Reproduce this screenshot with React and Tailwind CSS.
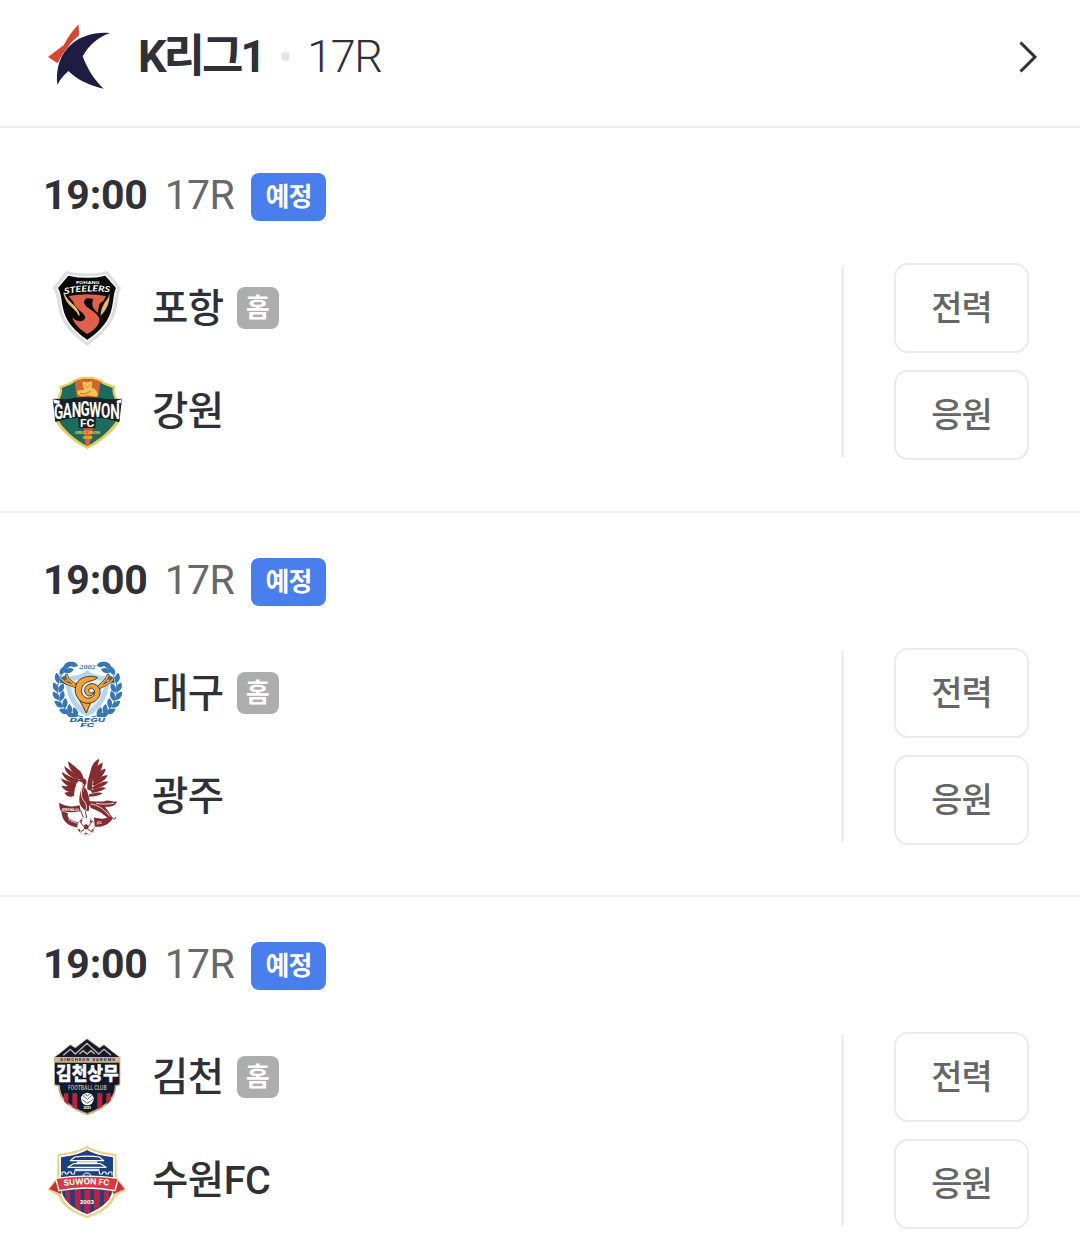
import React from "react";

const PohangCrest = () => (
  <svg viewBox="21 21 240 240" className="w-20 h-20">
    <path d="M78 33 Q143 48 203 33 L243 84 C230 105 238 150 212 190 C190 222 165 240 142 258 C118 240 92 222 72 190 C48 150 55 105 38 84 Z" fill="#dedee0" />
    <path d="M83 43 Q143 56 198 43 L232 84 C221 105 227 148 204 185 C186 213 163 229 142 245 C121 229 100 213 80 185 C58 148 64 105 50 84 Z" fill="#fff" />
    <path d="M85 47 Q143 60 196 47 L228 84 C217 105 223 148 200 183 C182 210 162 225 142 240 C122 225 102 210 84 183 C62 148 68 105 54 84 Z" fill="#0c090a" />
    <path d="M86 108 Q142 98 198 108 L190 124 C178 128 176 136 174 158 C160 150 152 134 160 118 C144 110 130 116 132 130 C138 146 166 152 178 174 C182 196 156 214 142 222 C122 210 106 198 96 172 C112 188 132 188 136 172 C130 154 108 150 100 126 Z" fill="#e0604c" />
    <path d="M72 98 C74 128 110 130 118 166 C104 138 80 138 72 98 Z" fill="#e8c068" stroke="#e8c068" strokeWidth="4" />
    <path d="M208 104 C206 120 184 130 182 166 C198 150 208 132 208 104 Z" fill="#e8c068" stroke="#e8c068" strokeWidth="1" />
    <path id="steelersArc" d="M74 103 Q142 88 213 98" fill="none" />
    <text fill="#fff" fontSize="25" fontWeight="700" fontStyle="italic" className="font-[Lato,sans-serif]">
      <textPath href="#steelersArc" textLength="136" lengthAdjust="spacingAndGlyphs">STEELERS</textPath>
    </text>
    <text x="108" y="73" fill="#fff" fontSize="11" fontWeight="900" textLength="70" lengthAdjust="spacingAndGlyphs" className="font-[Lato,sans-serif]">POHANG</text>
  </svg>
);

const GangwonCrest = () => (
  <svg viewBox="21 12 240 240" className="w-20 h-20">
    <path d="M142 26 C165 26 182 32 192 42 C202 48 216 50 226 55 C222 70 226 82 234 96 L240 158 C222 190 184 222 142 243 C100 222 64 190 45 158 L48 96 C58 82 62 70 58 55 C70 50 82 48 92 42 C104 32 120 26 142 26 Z" fill="#ecc95c" />
    <path d="M142 33 C163 33 178 38 188 48 L218 60 C216 74 220 84 227 97 L230 156 C212 186 180 214 142 234 C104 214 72 186 55 156 L56 97 C64 84 68 74 66 60 L96 48 C106 38 121 33 142 33 Z" fill="#1d6a5e" />
    <path d="M104 42 C120 32 162 30 182 42 L172 98 H112 Z" fill="#d9622f" />
    <path d="M130 176 H160 L148 230 L142 234 L136 228 Z" fill="#d9622f" />
    <path d="M127 42 C132 36 137 44 142 42 C148 40 156 36 158 42 L156 58 C168 62 176 72 174 84 C166 92 150 80 138 84 C126 88 112 84 110 72 C112 64 122 64 128 66 L132 62 C126 56 126 50 127 42 Z" fill="#f6c25a" stroke="#9a5823" strokeWidth="1.5" />
    <path d="M120 76 C132 80 144 76 152 68 M135 52 h3 M148 52 h3 M140 58 h5" fill="none" stroke="#a35e24" strokeWidth="2.5" />
    <path d="M38 92 L78 94 Q140 80 202 94 L246 92 L238 163 Q200 150 168 149 L166 181 H117 L114 149 Q80 150 46 162 Z" fill="#1a2227" />
    <path d="M39 94 L60 98 L58 108 L42 106 Z M245 94 L230 98 L231 108 L243 105 Z" fill="#fff" />
    <g transform="scale(0.7 1)">
      <text
        x="60 98 136 174 211 261 301"
        y="153 149 146 145 146 149 153"
        fill="#fff"
        fontSize="58"
        fontWeight="700"
        className="font-[Roboto,sans-serif]"
      >
        GANGWON
      </text>
    </g>
    <text x="120" y="177" fill="#fff" fontSize="33" fontWeight="700" textLength="43" lengthAdjust="spacingAndGlyphs" className="font-[Roboto,sans-serif]">FC</text>
    <text x="105" y="198" fill="#f5c84c" fontSize="13" fontWeight="700" textLength="74" lengthAdjust="spacingAndGlyphs" className="font-[Roboto,sans-serif]">GREAT UNION</text>
    <text x="127" y="214" fill="#f5c84c" fontSize="13" fontWeight="700" textLength="30" lengthAdjust="spacingAndGlyphs" className="font-[Roboto,sans-serif]">2008</text>
  </svg>
);

// one side of the laurel: [x, y, rotation]
const laurelLeaves = [
  [83, 45, 55], [99, 43, 105], [68, 61, 35], [86, 62, 75],
  [52, 84, -10], [70, 88, 40], [47, 112, -25], [64, 114, 25],
  [48, 138, -38], [66, 138, 15], [56, 163, -52], [75, 160, 5],
  [72, 184, -66], [89, 178, -5], [95, 196, -78], [106, 187, -20],
];

const LaurelSide = () => (
  <g>
    <path d="M104 38 C48 66 38 136 72 172 C88 190 108 197 130 201" fill="none" stroke="#3477b9" strokeWidth="3" />
    {laurelLeaves.map(([x, y, r], i) => (
      <path key={i} d="M0 -16 C10 -6 10 6 0 16 C-10 6 -10 -6 0 -16 Z" fill="#3477b9" transform={`translate(${x} ${y}) rotate(${r})`} />
    ))}
  </g>
);

const DaeguCrest = () => (
  <svg viewBox="21 6 240 240" className="w-20 h-20">
    <path d="M142 60 C162 78 184 78 208 80 C210 132 188 178 142 200 C96 178 74 132 76 80 C100 78 122 78 142 60 Z" fill="#b5d5ee" />
    <path d="M142 76 C160 90 176 92 194 93 C192 130 176 162 142 184 C108 162 92 130 90 93 C108 92 124 90 142 76 Z" fill="#e3eff8" />
    <LaurelSide />
    <g transform="translate(284 0) scale(-1 1)">
      <LaurelSide />
    </g>
    <g fill="none" strokeLinecap="round" strokeLinejoin="round">
      <path d="M66 88 C76 104 94 102 112 112 M80 76 C82 94 98 98 112 108 M218 88 C206 104 190 102 174 116 M204 76 C200 94 188 98 174 112" stroke="#282319" strokeWidth="9" />
      <path d="M66 88 C76 104 94 102 112 112 M80 76 C82 94 98 98 112 108 M218 88 C206 104 190 102 174 116 M204 76 C200 94 188 98 174 112" stroke="#f0a23c" strokeWidth="6" />
    </g>
    <path d="M113 140 L139 189 L153 156 Z" fill="#f0a23c" stroke="#282319" strokeWidth="2.5" />
    <path d="M172 83 C154 74 122 80 111 98 C100 118 106 146 128 157 C148 165 174 156 180 132 C184 108 160 94 144 104 C128 114 132 136 148 138 C156 138 162 132 162 126 C154 132 146 128 146 120 C148 110 162 114 164 126 C164 142 146 150 132 140 C118 126 124 104 142 96 C152 92 164 92 172 83 Z" fill="#f0a23c" stroke="#282319" strokeWidth="2.5" />
    <text x="118" y="58" fill="#3477b9" fontSize="20" fontStyle="italic" fontWeight="700" textLength="49" lengthAdjust="spacingAndGlyphs" className="font-[Liberation_Serif,serif]">2002</text>
    <text x="89" y="216" fill="#2566a8" stroke="#fff" strokeWidth="4" paintOrder="stroke" fontSize="15" fontStyle="italic" fontWeight="800" textLength="106" lengthAdjust="spacingAndGlyphs" className="font-[Inter,sans-serif]">DAEGU</text>
    <text x="121" y="230" fill="#2566a8" fontSize="14" fontStyle="italic" fontWeight="800" textLength="42" lengthAdjust="spacingAndGlyphs" className="font-[Inter,sans-serif]">FC</text>
  </svg>
);

const GwangjuCrest = () => (
  <svg viewBox="21 21 240 240" className="w-20 h-20">
    <g fill="#842c30">
      <path d="M118 78 C96 72 84 50 85 34 C96 40 104 54 122 64 Z" />
      <path d="M116 88 C90 84 74 64 73 48 C86 58 100 68 120 78 Z" />
      <path d="M112 99 C84 98 68 80 65 65 C80 76 96 82 116 88 Z" />
      <path d="M106 111 C84 114 68 100 63 85 C78 93 92 96 110 98 Z" />
      <path d="M102 125 C84 130 70 118 64 107 C78 110 90 108 108 104 Z" />
      <path d="M102 137 C92 144 78 138 73 128 C84 128 92 124 104 118 Z" />
      <path d="M98 44 C110 54 128 66 131 86 L116 88 C106 76 98 60 98 44 Z" />
      <path d="M142 118 C140 94 148 80 153 58 C156 44 164 32 178 26 C174 48 164 68 159 84 L155 124 Z" />
      <path d="M156 80 C162 56 172 42 188 38 C188 58 174 74 162 92 Z" />
      <path d="M158 92 C170 68 182 58 197 56 C194 74 178 86 162 98 Z" />
      <path d="M156 103 C176 82 188 76 203 76 C196 92 182 98 162 108 Z" />
      <path d="M154 114 C180 98 190 94 204 95 C196 108 180 112 160 118 Z" />
      <path d="M152 122 C178 112 188 110 198 114 C186 124 172 126 156 129 Z" />
      <path d="M148 132 C172 126 180 126 188 130 C176 138 160 140 146 140 Z" />
      <path d="M111 91 L127 86 C137 84 142 92 138 102 C130 116 124 132 134 146 C144 158 150 164 146 184 C132 184 116 166 118 148 C118 126 130 108 128 98 Z" />
      <path d="M134 112 C146 124 146 146 152 164 L142 172 C128 152 124 132 134 112 Z" />
      <path d="M147 154 C164 152 182 158 198 152 C210 150 220 158 231 154 C228 168 212 172 196 170 C200 184 206 192 214 200 L206 206 C190 192 176 182 152 174 Z" />
      <path d="M57 158 C80 170 96 172 119 166 L122 184 C98 188 78 188 60 180 Z" />
      <path d="M64 182 L84 190 C78 204 96 212 116 216 L119 232 C94 232 66 220 64 182 Z" />
      <path d="M162 202 C186 210 202 206 212 196 L218 206 C204 226 184 232 164 230 Z" />
    </g>
    <path d="M131 102 C124 116 120 136 130 150 C138 160 142 170 138 180 M152 162 C176 164 196 182 210 200 M168 160 C186 164 206 162 222 160" fill="none" stroke="#fff" strokeWidth="2.5" />
    <path d="M198 176 C206 186 210 198 218 205 C224 209 229 206 226 201" fill="none" stroke="#842c30" strokeWidth="3" />
    <path d="M124 84 L114 72 M122 182 L130 202 M136 184 L140 204" stroke="#842c30" strokeWidth="3" />
    <circle cx="138" cy="229" r="26" fill="#fff" stroke="#b98585" strokeWidth="2" strokeDasharray="9 4" />
    <path d="M130 228 L138 222 L147 228 L144 238 H133 Z M119 211 L128 208 L124 218 Z M151 208 L158 215 L149 218 Z M114 236 L122 239 L118 247 Z M161 235 L154 240 L159 247 Z M133 252 L138 247 L144 253 Z" fill="#842c30" />
    <path d="M130 228 L120 215 M147 228 L156 214 M144 238 L156 246 M133 238 L121 246" stroke="#842c30" strokeWidth="3" />
    <text x="66" y="182" fill="#fff" fontSize="12" fontWeight="700" textLength="50" lengthAdjust="spacingAndGlyphs" transform="rotate(2 66 182)" className="font-[Roboto,sans-serif]">GWANGJU</text>
    <text x="85" y="211" fill="#fff" fontSize="11" fontWeight="700" textLength="30" lengthAdjust="spacingAndGlyphs" transform="rotate(22 85 211)" className="font-[Roboto,sans-serif]">FOOT</text>
    <text x="172" y="224" fill="#fff" fontSize="12" fontWeight="700" transform="rotate(-12 172 224)" className="font-[Roboto,sans-serif]">FC</text>
  </svg>
);

const GimcheonCrest = () => (
  <svg viewBox="21 18 240 240" className="w-20 h-20">
    <path d="M42 80 L54 74 L91 43 L106 52 L141 25 L178 52 L192 43 L228 74 L241 80 V166 L228 170 C230 212 188 238 142 256 C96 238 54 212 55 170 L42 166 Z" fill="#c9ad82" />
    <path d="M46 81 L91 46 L106 55 L141 28 L178 55 L192 46 L237 81 Z" fill="#101a32" />
    <path d="M70 76 L91 58 L106 72 L141 40 L176 72 L192 58 L213 76 M118 72 L130 62 L141 72 L153 62 L164 72" fill="none" stroke="#d0b68e" strokeWidth="4" />
    <rect x="45" y="81" width="193" height="16" fill="#d0b68e" />
    <path d="M45 98 H238 V163 L224 166 C226 208 186 232 142 250 C98 232 58 208 60 166 L45 163 Z" fill="#101a32" />
    <path d="M72 190 H85 V226 L72 214 Z M97 190 H112 V238 L97 232 Z M172 190 H187 V230 L172 238 Z M199 190 H212 V212 L199 224 Z" fill="#b62839" />
    <circle cx="142" cy="207" r="19" fill="#fff" />
    <path d="M128 196 L142 208 L156 196 M125 208 L142 220 L159 208 M133 190 L142 198 L151 190" fill="none" stroke="#101a32" strokeWidth="2" />
    <text x="61" y="94" fill="#101a32" fontSize="12" fontWeight="700" textLength="164" className="font-[Roboto,sans-serif]">GIMCHEON SANGMU</text>
    <text x="48" y="151" fill="#fff" stroke="#fff" strokeWidth="1" fontSize="53" fontWeight="900" textLength="188" lengthAdjust="spacingAndGlyphs" className="font-['Noto_Sans_CJK_KR',sans-serif]">김천상무</text>
    <text x="84" y="179" fill="#d0b68e" fontSize="20" fontWeight="500" textLength="116" lengthAdjust="spacingAndGlyphs" className="font-[Roboto,sans-serif]">FOOTBALL CLUB</text>
    <text x="130" y="238" fill="#fff" fontSize="12" fontWeight="700" textLength="24" className="font-[Roboto,sans-serif]">2021</text>
  </svg>
);

const SuwonCrest = () => (
  <svg viewBox="21 9 240 240" className="w-20 h-20">
    <path d="M141 24 C168 40 198 44 229 48 L231 118 L258 155 L226 175 C216 207 180 228 141 240 C102 228 66 207 56 175 L22 155 L51 118 L53 48 C84 44 114 40 141 24 Z" fill="#f0cf83" />
    <path d="M141 31 C168 46 196 50 224 54 V120 L220 170 C208 202 176 221 141 233 C106 221 74 202 62 170 L58 120 V54 C86 50 114 46 141 31 Z" fill="#fff" />
    <path d="M141 36 C168 51 194 54 219 58 V120 L215 168 C202 198 174 216 141 228 C108 216 80 198 67 168 L63 120 V58 C88 54 114 51 141 36 Z" fill="#1b427f" />
    <path d="M104 57 Q141 52 178 57 L191 68 H91 Z M100 77 H182 L198 88 H84 Z" fill="#1b427f" stroke="#fff" strokeWidth="3.5" strokeLinejoin="round" />
    <path d="M110 70 H172 V75 H110 Z M104 92 H178 V96 H104 Z" fill="#dfe6f0" />
    <path d="M66 112 V102 H76 V108 H84 V102 H94 V108 H104 V98 H178 V108 H188 V102 H198 V108 H206 V102 H216 V112" fill="none" stroke="#fff" strokeWidth="3" />
    <path d="M130 118 V110 Q141 100 152 110 V118 Z" fill="#1b427f" stroke="#fff" strokeWidth="3" />
    <path d="M76 158 H91 V200 L76 184 Z M104 155 H122 V217 L104 209 Z M133 155 H151 V223 L141 227 L133 223 Z M162 155 H180 V207 L162 217 Z M192 158 H207 V184 L192 198 Z" fill="#b52545" />
    <path d="M50 126 L66 150 L63 168 L28 153 Z M232 126 L216 150 L219 168 L254 153 Z" fill="#cb303d" />
    <path d="M47 121 Q141 108 235 121 L225 158 Q141 142 57 158 Z" fill="#d83a43" stroke="#fff" strokeWidth="4" />
    <path id="suwonArc" d="M72 144 Q141 134 212 144" fill="none" />
    <text fill="#fff" fontSize="25" fontWeight="700" className="font-[Inter,sans-serif]">
      <textPath href="#suwonArc" textLength="136" lengthAdjust="spacingAndGlyphs">SUWON FC</textPath>
    </text>
    <text x="120" y="197" fill="#fff" fontSize="15" fontWeight="800" textLength="42" lengthAdjust="spacingAndGlyphs" className="font-[Inter,sans-serif]">2003</text>
  </svg>
);

const LeagueLogo = () => (
  <svg viewBox="51 36 192 201" className="w-16 h-[67px] shrink-0">
    <path d="M146 40 L147 73 C136 84 124 92 114 108 C104 120 92 136 83 157 L54 138 L101 103 C112 81 128 58 146 40 Z" fill="#d8452e" />
    <path d="M240 66 C208 77 178 99 158 136 C173 176 194 209 221 233 C182 224 143 208 115 180 C102 192 91 204 82 222 C76 170 92 126 126 98 C158 72 198 62 240 66 Z" fill="#1d1c43" />
  </svg>
);

const matches = [
  {
    time: "19:00",
    round: "17R",
    home: { name: "포항", Crest: PohangCrest },
    away: { name: "강원", Crest: GangwonCrest },
  },
  {
    time: "19:00",
    round: "17R",
    home: { name: "대구", Crest: DaeguCrest },
    away: { name: "광주", Crest: GwangjuCrest },
  },
  {
    time: "19:00",
    round: "17R",
    home: { name: "김천", Crest: GimcheonCrest },
    away: { name: "수원FC", Crest: SuwonCrest },
  },
];

const TeamRow = ({ team, isHome }) => {
  const { name, Crest } = team;
  return (
    <div className="flex items-center h-20">
      <Crest />
      <span className={`ml-[25px] text-[39.5px] leading-[48px] font-medium tracking-[-0.5px] text-[#2f3038] ${isHome ? "pt-[3px]" : ""}`}>
        {name}
      </span>
      {isHome && (
        <span className="ml-[13px] mt-0.5 flex items-center justify-center w-[42px] h-[42px] rounded-lg bg-[#adadad] text-[26px] leading-none font-bold text-white">
          홈
        </span>
      )}
    </div>
  );
};

const ActionButton = ({ children }) => (
  <button className="w-[135px] h-[90px] rounded-[14px] border-2 border-[#ebebeb] bg-white text-[34px] leading-none font-medium tracking-[-1px] text-[#666]">
    {children}
  </button>
);

const MatchCard = ({ match }) => (
  <section className="pt-[45px] pb-[50px] first:pb-[51px] border-b-2 border-[#efeff0] last:border-b-0">
    <div className="flex items-center h-12 pl-[43px]">
      <div className="flex w-52 pb-[3px] text-[41px] leading-[45px] tracking-[-0.2px]">
        <span className="font-bold text-[#2f3038]">{match.time}</span>
        <span className="ml-[17px] font-normal tracking-[-0.6px] text-[#686868]">{match.round}</span>
      </div>
      <span className="flex items-center justify-center w-[75px] h-12 rounded-lg bg-[#4a7eec] text-[26px] leading-none font-bold tracking-[-1px] text-white">
        예정
      </span>
    </div>

    <div className="mt-[42px] flex justify-between pl-[47px] pr-[51px]">
      <div className="flex flex-col gap-[25px] pt-1">
        <TeamRow team={match.home} isHome />
        <TeamRow team={match.away} />
      </div>
      <div className="flex items-center">
        <div className="w-[3px] h-[191px] mr-[50px] bg-[#efeff0]" />
        <div className="flex flex-col gap-[17px]">
          <ActionButton>전력</ActionButton>
          <ActionButton>응원</ActionButton>
        </div>
      </div>
    </div>
  </section>
);

const App = () => {
  return (
    <div className="w-full h-[1253px] overflow-hidden bg-white font-[Roboto,'Noto_Sans_CJK_KR',sans-serif]">
      <header className="flex items-center h-32 pl-[47px] pr-[42px] pb-3.5 border-b-2 border-[#efeff0]">
        <LeagueLogo />
        <h1 className="ml-[27px] pt-0.5 text-[45px] leading-[56px] font-bold tracking-[-3px] text-[#2f3038]">K리그1</h1>
        <span className="ml-[18px] w-[9px] h-[9px] rounded-full bg-[#e2e2e8]" />
        <span className="ml-[17px] pt-0.5 text-[45px] leading-[56px] font-light tracking-[-1.5px] text-[#2f3038]">17R</span>
        <svg viewBox="0 0 20 34" className="mt-0.5 ml-auto w-5 h-[34px]" fill="none" stroke="#2f3038" strokeWidth="3">
          <path d="M2.5 2.5 L17 17 L2.5 31.5" />
        </svg>
      </header>

      <main>
        {matches.map((match, i) => (
          <MatchCard key={i} match={match} />
        ))}
      </main>
    </div>
  );
};

export default App;
